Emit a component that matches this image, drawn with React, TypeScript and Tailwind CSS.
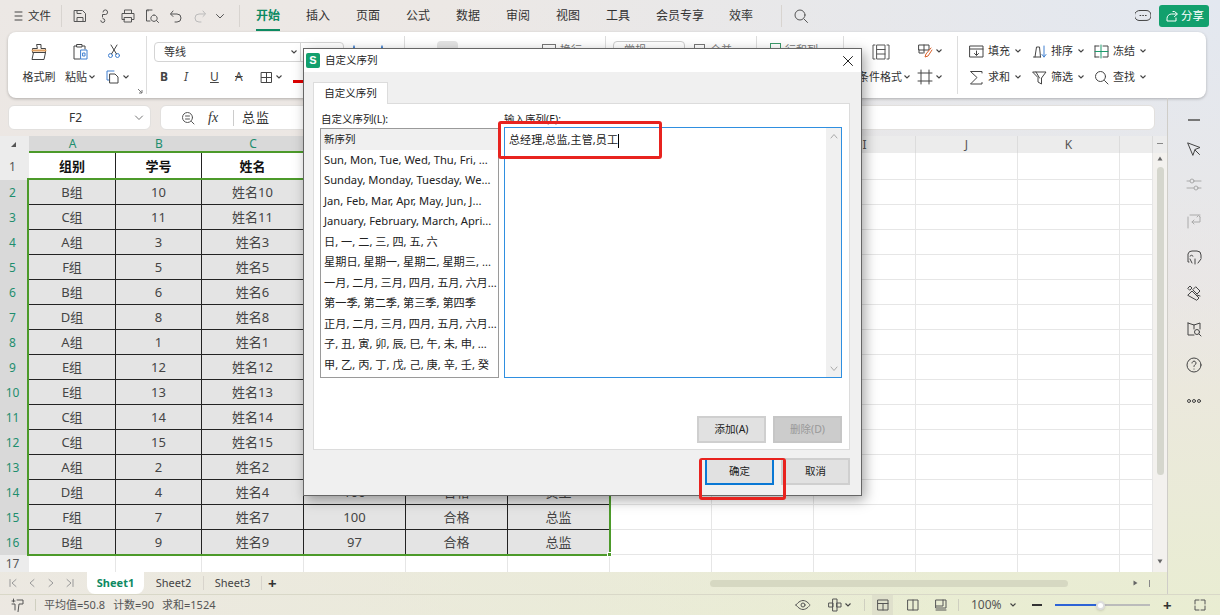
import React from "react";

type IP = { w?: number; h?: number; className?: string; children: React.ReactNode; sw?: number };
const I = ({ w = 16, h = 16, className = "", children, sw = 1 }: IP) => (
  <svg viewBox={`0 0 ${w} ${h}`} width={w} height={h} fill="none" stroke="currentColor" strokeWidth={sw} strokeLinecap="round" strokeLinejoin="round" className={"shrink-0 " + className}>
    {children}
  </svg>
);
const Caret = ({ className = "" }: { className?: string }) => (
  <svg viewBox="0 0 6 4" width={6} height={4} className={"shrink-0 " + className}><path d="M0.5 0.5 L3 3 L5.5 0.5" fill="none" stroke="#444" strokeWidth="1.1" /></svg>
);
const Div = () => <div className="w-px h-[22px] bg-[#d8d4d0] shrink-0" />;

const tabs = [
  ["开始", 24], ["插入", 24], ["页面", 24], ["公式", 24], ["数据", 24], ["审阅", 24], ["视图", 24], ["工具", 24], ["会员专享", 47], ["效率", 24],
] as [string, number][];

function TopBar() {
  return (
    <div className="h-8 flex items-center text-[#333] shrink-0">
      <I w={10} h={12} className="ml-[14px] text-[#444]"><path d="M1 2h7M1 6h7M1 10h7" /></I>
      <span className="text-[11.5px] ml-[4px] w-[24px]">文件</span>
      <div className="ml-[9px]"><Div /></div>
      <div className="flex items-center ml-[10px] gap-[8px] text-[#555]">
        <I><path d="M2.5 2.5h8l3 3v8h-11zM5 13.5v-4h6v4M5 2.5v3h4" /></I>
        <I><path d="M7 10.5a2 2 0 1 1-2.2 2.2M6.5 9V6.5h3a2.3 2.3 0 1 0-2.5-2.5" /></I>
        <I><path d="M4.5 5V2h7v3M4.5 11.5H2V5.5h12v6h-2.500M4.500 9.500h7v4.500h-7z" /></I>
        <I><path d="M8 2H2.500v11H6M4 2v1M10 7a3.200 3.200 0 1 0 .01 0M12.500 12.500l2 2" /></I>
        <I><path d="M5 3L2.500 6 5 8.500M3 6h6a3.500 3.500 0 0 1 0 8H7" /></I>
        <I className="text-[#bbb]"><path d="M11 3l2.500 3L11 8.500M13 6H7a3.500 3.500 0 0 0 0 8h2" /></I>
        <I className="-ml-[2px]" w={12}><path d="M2.500 6.500L6 10l3.500-3.500" /></I>
      </div>
      <div className="ml-[13px]"><Div /></div>
      <div className="flex items-center gap-[26px] ml-[16px] text-[12px]">
        {tabs.map(([t, w], i) => (
          <div key={t} style={{ width: w }} className={i === 0 ? "relative text-[#0d8a62] font-bold whitespace-nowrap" : "whitespace-nowrap"}>
            {t}
            {i === 0 && <div className="absolute left-0 right-0 -bottom-[6px] h-[2px] bg-[#0d8a62]" />}
          </div>
        ))}
      </div>
      <div className="ml-[28px]"><Div /></div>
      <I className="ml-[11px] text-[#555]"><circle cx="7" cy="7" r="5" /><path d="M11 11l3.500 3.500" /></I>
      <div className="flex-1" />
      <I className="text-[#444] mr-[8px]"><path d="M5 2.500h6a5 5 0 0 1 1 9.900l-8 .1a5 5 0 0 1 1-10z" /><path d="M5 7.500h.8M7.700 7.500h.8M10.400 7.500h.8" /></I>
      <div className="w-[50px] h-[22px] mr-[11px] rounded-[3px] bg-[#12a06d] text-white text-[11.5px] flex items-center pl-[6px] gap-[2px]">
        <I w={14} h={14}><path d="M8 2.500h1.500L12.500 5l-3 2.500M11.500 5H6.500A4.500 4.500 0 0 0 2 9.500V12h9V9" /></I>
        <span className="whitespace-nowrap">分享</span>
      </div>
    </div>
  );
}

const Lbl = ({ t }: { t: string }) => <span className="block leading-[14px] text-[11px] whitespace-nowrap text-[#333]">{t}</span>;

function Ribbon() {
  return (
    <div className="h-[66px] mx-2 w-[1198px] rounded-lg bg-white shadow-[0_1px_3px_rgba(0,0,0,0.25)] flex shrink-0 text-[#333]">
      {/* clipboard */}
      <div className="relative w-[139px] shrink-0 border-r border-[#ddd] my-[4px] flex pl-[15px]">
        <div className="w-[32px] flex flex-col items-center pt-[6px]">
          <I w={20} h={20} className="text-[#444]"><path d="M8 2.500h4v4h4.500v4h-13v-4H8zM4.500 10.500L3 17.500h12l1.500-7" /><path d="M3.500 8.500h13" stroke="#e0a060" strokeWidth="2" /></I>
          <div className="mt-[8px]"><Lbl t="格式刷" /></div>
        </div>
        <div className="w-[32px] ml-[10px] flex flex-col items-center pt-[6px]">
          <I w={20} h={20} className="text-[#444]"><path d="M5.500 4H3v13h6M14 7V4h-2.500M6 2.500h5V5H6z" /><path d="M10 8h6v9h-6z" stroke="#3f7fd0" /><path d="M12 11h2v3h-2z" stroke="#3f7fd0" /></I>
          <div className="mt-[8px] flex items-center gap-[2px] -ml-[2px]"><Lbl t="粘贴" /><Caret /></div>
        </div>
        <div className="ml-[8px] flex flex-col items-start pt-[7px]">
          <I w={16} h={16} className="text-[#3f7fd0] ml-[1px]"><circle cx="4.500" cy="12.500" r="2" /><circle cx="11.500" cy="12.500" r="2" /><path d="M5.500 11L11 2M10.500 11L5 2" stroke="#444" /></I>
          <div className="mt-[10px] flex items-center gap-[2px]">
            <I w={16} h={16} className="text-[#3f7fd0]"><path d="M9 2H2v9h2" /><path d="M5 5h5l3 3v6H5z" stroke="#444" /></I>
            <Caret />
          </div>
        </div>
        <svg viewBox="0 0 6 6" width={6} height={6} className="absolute right-[3px] bottom-0"><path d="M1 1l4 4M5 2v3H2" fill="none" stroke="#777" /></svg>
      </div>
      {/* font */}
      <div className="w-[258px] shrink-0 border-r border-[#ddd] my-[4px] pl-[7px] pt-[6px] flex flex-col">
        <div className="flex items-center h-[20px]">
          <div className="w-[190px] h-[20px] rounded border border-[#d4d4d4] flex items-center">
            <span className="text-[11px] pl-[9px] w-[136px]">等线</span>
            <Caret />
            <div className="w-px h-full bg-[#d4d4d4] ml-[3px]" />
          </div>
          <I className="ml-[5px] text-[#3f7fd0]"><path d="M5 2l3 10M5 2L2 12" /></I>
          <I className="ml-[12px] text-[#3f7fd0]"><path d="M5 2l3 10M5 2L2 12" /></I>
        </div>
        <div className="flex items-center mt-[6px] text-[#444] text-[12px] pl-[6px] gap-[14px]">
          <b className="w-[11px]">B</b>
          <i className="w-[11px] -ml-[1px] mr-[1px]">I</i>
          <span className="w-[11px] underline">U</span>
          <span className="w-[11px] line-through">A</span>
          <div className="flex items-center gap-[3px]">
            <I w={13} h={13}><path d="M1.500 1.500h10v10h-10zM6.500 1.500v10M1.500 6.500h10" /></I>
            <Caret />
          </div>
          <div className="w-[11px] h-[11px] border-b-[3px] border-[#d00] -ml-[3px]" />
        </div>
      </div>
      {/* alignment - mostly behind the dialog */}
      <div className="w-[201px] shrink-0 border-r border-[#ddd] my-[4px] flex items-start pt-[5px] pl-[12px] text-[#777]">
        <div className="w-[11px] h-[2px] bg-[#777] mt-[7px]" />
        <div className="ml-[9px] w-[21px] h-[20px] rounded bg-[#e4e4e4]" />
        <div className="ml-[34px] w-[11px] h-[2px] bg-[#999] mt-[7px]" />
        <div className="ml-[14px] w-[11px] h-[2px] bg-[#999] mt-[7px]" />
        <div className="ml-[14px] w-[14px] h-[12px] border border-[#777] mt-[3px]" />
        <span className="ml-[4px] mt-[1px] text-[11px]">换行</span>
      </div>
      <div className="w-[151px] shrink-0 border-r border-[#ddd] my-[4px] flex items-start pt-[5px] pl-[7px] text-[#777]">
        <div className="w-[72px] h-[20px] rounded border border-[#ccc] text-[11px] pl-[10px]">常规</div>
        <div className="ml-[9px] w-[11px] h-[10px] border border-[#777] mt-[3px]" />
        <span className="ml-[5px] mt-[1px] text-[11px]">合并</span>
      </div>
      <div className="w-[87px] shrink-0 border-r border-[#ddd] my-[4px] flex items-start pt-[5px] pl-[13px] text-[#777]">
        <div className="w-[11px] h-[12px] border border-[#3c9a6a] mt-[2px]" />
        <span className="ml-[4px] mt-[1px] text-[11px] whitespace-nowrap">行和列</span>
      </div>
      {/* cond format */}
      <div className="w-[114px] shrink-0 border-r border-[#ddd] my-[4px] flex pl-[14px]">
        <div className="w-[48px] flex flex-col items-start pt-[7px]">
          <I w={20} h={18} className="text-[#555] ml-[13px]"><path d="M4 2H2v14h2M16 2h2v14h-2M6 2h8v14H6zM6 6.500h8M6 11h8" /></I>
          <div className="mt-[9px] flex items-center gap-[2px] whitespace-nowrap"><Lbl t="条件格式" /><Caret /></div>
        </div>
        <div className="ml-[11px] flex flex-col pt-[7px]">
          <div className="flex items-center gap-[3px] h-[16px]">
            <I w={16} h={16} className="text-[#444]"><path d="M2 2h10v5H2zM7 2v8M2 7v3h4" /><path d="M14 5L9 11l-1 3 3-1 4-6" stroke="#d9602a" /></I>
            <Caret />
          </div>
          <div className="flex items-center gap-[3px] h-[16px] mt-[10px]">
            <I w={16} h={16} className="text-[#444]"><path d="M1 4h14M1 12h14M4 1v14M12 1v14" /></I>
            <Caret />
          </div>
        </div>
      </div>
      {/* edit */}
      <div className="flex pt-[11px] pl-[11px] text-[#444]">
        <div className="w-[63px] flex flex-col gap-[10px]">
          <div className="flex items-center h-[16px]"><I w={15} h={15}><path d="M1 2h13v11H1zM1 5h13M7.500 7v4M5.500 9.500l2 2 2-2" /></I><span className="ml-[4px]"><Lbl t="填充" /></span><Caret className="ml-[5px]" /></div>
          <div className="flex items-center h-[16px]"><I w={15} h={15}><path d="M13 3V1.500H1.500L8 7.500l-6.500 6.500H13V12.500" /></I><span className="ml-[4px]"><Lbl t="求和" /></span><Caret className="ml-[5px]" /></div>
        </div>
        <div className="w-[62px] flex flex-col gap-[10px]">
          <div className="flex items-center h-[16px]"><I w={15} h={15}><path d="M1.500 13h7M3 13l1.500-10h3l1 10" /><path d="M12 2v11M10 10.500l2 2.500 2-2.500" stroke="#3f7fd0" /></I><span className="ml-[4px]"><Lbl t="排序" /></span><Caret className="ml-[5px]" /></div>
          <div className="flex items-center h-[16px]"><I w={15} h={15}><path d="M1 2h13L9.500 8v6L6 12V8zM4 2l3.500 6" /></I><span className="ml-[4px]"><Lbl t="筛选" /></span><Caret className="ml-[5px]" /></div>
        </div>
        <div className="w-[62px] flex flex-col gap-[10px]">
          <div className="flex items-center h-[16px]"><I w={15} h={15}><path d="M1 2h4M1 2v11M1 13h4M9 2h5v11H9" /><path d="M1 7.500h13M7 1v13" stroke="#1d9a6c" /></I><span className="ml-[4px]"><Lbl t="冻结" /></span><Caret className="ml-[5px]" /></div>
          <div className="flex items-center h-[16px]"><I w={15} h={15}><circle cx="6.500" cy="6.500" r="5" /><path d="M10.500 10.500l3.500 3.500" /></I><span className="ml-[4px]"><Lbl t="查找" /></span><Caret className="ml-[5px]" /></div>
        </div>
      </div>
    </div>
  );
}

function FormulaBar() {
  return (
    <div className="flex mt-[7px] ml-2 h-[25px] shrink-0 gap-[9px] text-[#333]">
      <div className="w-[143px] bg-white rounded-md border border-[#e2e0de] flex items-center">
        <span className="text-[12px] w-[125px] text-center pl-[8px]">F2</span>
        <I w={10} h={8} className="text-[#777]"><path d="M1.500 2L5 5.500 8.500 2" /></I>
      </div>
      <div className="w-[995px] bg-white rounded-md border border-[#e2e0de] flex items-center">
        <I w={14} h={14} className="ml-[20px] text-[#555]"><circle cx="6.500" cy="6.500" r="5" /><path d="M4.500 5h4M4.500 8h4M10.500 10.500l2.500 2.500" /></I>
        <span className="ml-[13px] w-[16px] text-[#333] text-[14px] italic font-['Liberation_Serif',serif]">fx</span>
        <div className="w-px h-[16px] bg-[#ccc] ml-[9px]" />
        <span className="ml-[8px] text-[13px] tracking-[1px]">总监</span>
      </div>
    </div>
  );
}

const rows: string[][] = [
  ["B组", "10", "姓名10"], ["C组", "11", "姓名11"], ["A组", "3", "姓名3"], ["F组", "5", "姓名5"], ["B组", "6", "姓名6"],
  ["D组", "8", "姓名8"], ["A组", "1", "姓名1"], ["E组", "12", "姓名12"], ["E组", "13", "姓名13"], ["C组", "14", "姓名14"],
  ["C组", "15", "姓名15"], ["A组", "2", "姓名2"], ["D组", "4", "姓名4", "100", "合格", "员工"], ["F组", "7", "姓名7", "100", "合格", "总监"], ["B组", "9", "姓名9", "97", "合格", "总监"],
];
const letters = ["A", "B", "C", "", "", "", "", "", "I", "J", "K", ""];
const emptyCell = "bg-white border-r border-b border-[#e6e6e6]";

function Sheet() {
  return (
    <div className="relative flex mt-[6px] h-[436px] shrink-0">
      <div className="grid grid-cols-[29px_87px_86px_102px_102px_102px_102px_102px_102px_102px_102px_102px_33px] grid-rows-[17px_27px_repeat(15,25px)_17px] w-[1153px] text-[13px] text-[#444]">
        <div className="bg-[#ececec] flex items-center justify-center pr-[3px]">
          <svg viewBox="0 0 7 7" width={7} height={7}><path d="M6 1v5H1z" fill="#555" /></svg>
        </div>
        {letters.map((l, i) => (
          <div key={i} className={i < 6 ? "bg-[#d9d9d9] text-[#1e8e6e] text-[12px] flex items-center justify-center border-b-2 border-[#4c9a2a]" : "bg-[#ececec] text-[#555] text-[12px] flex items-center justify-center border-r border-[#dcdcdc]"}>{l}</div>
        ))}
        <div className="bg-[#ececec] text-[#555] text-[12px] flex items-center justify-center pr-[4px]">1</div>
        {["组别", "学号", "姓名", "", "", ""].map((t, i) => (
          <div key={i} className="bg-white border-r border-b border-[#222] font-bold text-[#111] flex items-center justify-center pt-px">{t}</div>
        ))}
        {Array.from({ length: 6 }).map((_, i) => <div key={i} className={emptyCell} />)}
        {rows.map((r, ri) => (
          <React.Fragment key={ri}>
            <div className="bg-[#d9d9d9] text-[#1e8e6e] text-[12px] flex items-center justify-center pr-[4px]">{ri + 2}</div>
            {[0, 1, 2, 3, 4, 5].map((c) => (
              <div key={c} className="bg-[#e4e4e4] border-r border-b border-[#222] flex items-center justify-center pt-px">{r[c] ?? ""}</div>
            ))}
            {Array.from({ length: 6 }).map((_, i) => <div key={i} className={emptyCell} />)}
          </React.Fragment>
        ))}
        <div className="bg-[#ececec] text-[#555] text-[12px] flex items-center justify-center pr-[4px]">17</div>
        {Array.from({ length: 12 }).map((_, i) => <div key={i} className="bg-white border-r border-[#e6e6e6]" />)}
      </div>
      {/* selection */}
      <div className="absolute left-[27px] top-[42px] w-[584px] h-[378px] border-2 border-[#4c9a2a] pointer-events-none">
        <div className="absolute -right-[3px] -bottom-[3px] w-[5px] h-[5px] bg-[#4c9a2a] border border-white" />
      </div>
      {/* vertical scrollbar */}
      <div className="w-[14px] flex flex-col items-center bg-[#f3f1ee]">
        <div className="h-[17px] w-full bg-[#ececec] flex items-end justify-center"><div className="w-[6px] h-px bg-[#888] mb-[9px]" /></div>
        <svg viewBox="0 0 6 5" width={6} height={5} className="mt-[3px]"><path d="M3 0.500L5.500 4.500H0.500z" fill="#666" /></svg>
        <div className="w-[7px] h-[308px] rounded bg-[#d5d6cd] mt-[6px]" />
        <div className="flex-1" />
        <svg viewBox="0 0 6 5" width={6} height={5} className="mb-[8px]"><path d="M3 4.500L5.500 0.500H0.500z" fill="#666" /></svg>
      </div>
    </div>
  );
}

function SheetTabs() {
  return (
    <div className="h-[22px] flex items-center text-[#444] text-[11px] shrink-0 relative">
      <div className="flex items-center ml-[8px] gap-[9px] text-[#999]">
        <I w={10} h={10}><path d="M2 1.500v7M8 1.500L4 5l4 3.500" /></I>
        <I w={10} h={10}><path d="M7 1.500L3 5l4 3.500" /></I>
        <I w={10} h={10}><path d="M3 1.500L7 5 3 8.500" /></I>
        <I w={10} h={10}><path d="M8 1.500v7M2 1.500L6 5 2 8.500" /></I>
      </div>
      <div className="w-[57px] h-[22px] ml-[12px] rounded-b-lg bg-white text-[#0d8a62] font-bold flex items-center justify-center">Sheet1</div>
      <div className="w-[59px] text-center">Sheet2</div>
      <div className="w-px h-[14px] bg-[#d8d4cc]" />
      <div className="w-[57px] text-center">Sheet3</div>
      <div className="w-px h-[14px] bg-[#d8d4cc]" />
      <span className="ml-[6px] text-[15px] font-bold text-[#333]">+</span>
      <div className="absolute left-[710px] w-[358px] h-[7px] rounded bg-[#d6d8c2]" />
      <svg viewBox="0 0 5 6" width={5} height={6} className="absolute left-[1133px]"><path d="M0.500 0.500L4.500 3 0.500 5.500z" fill="#666" /></svg>
      <div className="absolute left-[1149px] w-px h-[7px] bg-[#888]" />
    </div>
  );
}

function Sidebar() {
  const Cell = ({ c, k = "" }: { c: React.ReactNode; k?: string }) => <div className={"h-[36px] flex items-center justify-center " + k}>{c}</div>;
  return (
    <div className="w-[53px] border-l border-[#cfcdc8] pt-[11px] text-[#444] shrink-0">
      <div className="h-[22px] flex items-center justify-center"><div className="w-[12px] h-[1.5px] bg-[#777]" /></div>
      <Cell c={<I w={18} h={18}><path d="M3 3l12 4.500-5 2-2 5.500z" /><path d="M10 10l4.500 4.500" /></I>} />
      <Cell k="text-[#aaa]" c={<I w={18} h={18}><path d="M2 5h3M9 5h7M2 12h7M13 12h3" /><circle cx="7" cy="5" r="2" /><circle cx="11" cy="12" r="2" /></I>} />
      <Cell k="text-[#aaa]" c={<I w={18} h={18}><path d="M3 5v11M5 3h10M15 5v5H7M9 8l-2 2 2 2M12 5l1.500-1.500L15 5" /></I>} />
      <Cell c={<I w={18} h={18}><path d="M4 14H3V6a4 4 0 0 1 4-3h5a4 4 0 0 1 4 4v3" /><path d="M7 15l-2-4M10 16v-5M13 15l3-4M5 8a2 2 0 0 1 3 0" /></I>} />
      <Cell c={<I w={18} h={18}><path d="M3 11l4-4 7 7-2 2zM11 3l4 4-3 3-4-4zM3 4l2-2 2 2-2 2zM12 11l3 1" /></I>} />
      <Cell c={<I w={18} h={18}><path d="M3 3l6 2 6-2v6M3 3v12h6M9 5v4" /><circle cx="12" cy="12" r="2.500" /><path d="M14 14l2 2" /></I>} />
      <Cell c={<I w={18} h={18}><circle cx="9" cy="9" r="7" /><path d="M7 7a2 2 0 1 1 3 1.800c-.7.400-1 .800-1 1.700M9 13v.1" /></I>} />
      <Cell c={<I w={18} h={8}><circle cx="4" cy="4" r="1.500" /><circle cx="9" cy="4" r="1.500" /><circle cx="14" cy="4" r="1.500" /></I>} />
    </div>
  );
}

function StatusBar() {
  return (
    <div className="h-[21px] border-t border-[#d9d8c8] flex items-center text-[#555] text-[11px] shrink-0">
      <I w={14} h={14} className="ml-[10px] text-[#555]"><path d="M2 3h3M3.500 1v3M2 6h3v6M7 2h6v4H9l-1 8" /></I>
      <div className="w-px h-[12px] bg-[#cfcfc0] ml-[11px]" />
      <span className="ml-[8px] whitespace-nowrap">平均值=50.8</span>
      <span className="ml-[8px] whitespace-nowrap">计数=90</span>
      <span className="ml-[8px] whitespace-nowrap">求和=1524</span>
      <div className="flex-1" />
      <I w={16} h={12} className="text-[#555]"><path d="M1 6s3-4.500 7-4.500S15 6 15 6s-3 4.500-7 4.500S1 6 1 6z" /><circle cx="8" cy="6" r="2" /></I>
      <I w={14} h={14} className="ml-[17px] text-[#555]"><path d="M5 1h4v12H5zM1 5h4v4H1zM9 5h4v4H9z" /></I>
      <Caret className="ml-[3px]" />
      <div className="w-px h-[12px] bg-[#cfcfc0] ml-[13px]" />
      <div className="ml-[7px] w-[21px] h-[20px] bg-[#dfe0cc] flex items-center justify-center"><I w={12} h={12}><path d="M1 1h10v10H1zM1 4.500h10M6 4.500V11" /></I></div>
      <I w={12} h={12} className="ml-[14px]"><path d="M1 1h10v10H1zM6 1v10" /></I>
      <I w={12} h={12} className="ml-[16px]"><path d="M1 1h10v8H1zM1 11h10M8 1v6H1" /></I>
      <div className="w-px h-[12px] bg-[#cfcfc0] ml-[11px]" />
      <span className="ml-[12px] w-[32px] text-[12px]">100%</span>
      <Caret className="ml-[7px]" />
      <div className="w-[10px] h-[1.5px] bg-[#333] ml-[16px]" />
      <div className="ml-[13px] w-[95px] h-[2px] flex items-center relative bg-[#bbb]">
        <div className="w-[44px] h-[2px] bg-[#2d63d6]" />
        <div className="absolute left-[41px] w-[9px] h-[9px] rounded-full bg-white shadow border-[2px] border-[#ddd]" />
      </div>
      <span className="ml-[13px] text-[15px] font-bold text-[#333] w-[10px] leading-none">+</span>
      <I w={12} h={12} className="ml-[21px] mr-[14px]"><path d="M7 1h4v4M1 7v4h4M5 1H1v4M7 11h4V7" /></I>
    </div>
  );
}

const seqItems = [
  "新序列", "Sun, Mon, Tue, Wed, Thu, Fri, ...", "Sunday, Monday, Tuesday, We...", "Jan, Feb, Mar, Apr, May, Jun, J...", "January, February, March, Apri...",
  "日, 一, 二, 三, 四, 五, 六", "星期日, 星期一, 星期二, 星期三, ...", "一月, 二月, 三月, 四月, 五月, 六月...", "第一季, 第二季, 第三季, 第四季", "正月, 二月, 三月, 四月, 五月, 六月...",
  "子, 丑, 寅, 卯, 辰, 巳, 午, 未, 申, ...", "甲, 乙, 丙, 丁, 戊, 己, 庚, 辛, 壬, 癸",
];

function Dialog() {
  const btn = "w-[69px] h-[27px] border-2 border-[#cfcfcf] bg-[#e1e1e1] flex items-center justify-center text-[10.5px]";
  return (
    <div className="absolute left-[303px] top-[48px] w-[559px] h-[448px] bg-[#f0f0f0] border border-[#666] shadow-[3px_4px_12px_rgba(0,0,0,0.35)] text-[10.5px] text-[#222] flex flex-col">
      <div className="h-[23px] bg-white flex items-center shrink-0">
        <div className="ml-[2px] w-[14px] h-[15px] rounded-[2px] bg-[#12a06d] text-white text-[11px] font-bold flex items-center justify-center font-['Liberation_Sans',sans-serif]">S</div>
        <span className="ml-[5px]">自定义序列</span>
        <div className="flex-1" />
        <I w={12} h={12} className="mr-[7px] text-[#222]"><path d="M1.500 1.500l9 9M10.500 1.500l-9 9" /></I>
      </div>
      <div className="flex-1 pl-[9px] pr-[11px] pt-[10px] flex flex-col">
        <div className="w-[75px] h-[22px] bg-white border border-[#dcdcdc] border-b-0 flex items-center justify-center shrink-0 relative z-10 -mb-px">自定义序列</div>
        <div className="w-[537px] h-[347px] bg-white border border-[#dcdcdc] flex flex-col shrink-0 pl-[6px] pt-[8px]">
          <div className="flex">
            <div className="w-[184px]">
              <div className="h-[16px] leading-[14px] pl-px">自定义序列(L):</div>
              <div className="w-[179px] h-[250px] border border-[#9a9a9a] text-[11.2px] overflow-hidden">
                {seqItems.map((s, i) => (
                  <div key={s} className={"h-[20.500px] leading-[20px] pl-[3px] whitespace-nowrap " + (i === 0 ? "bg-[#f0f0f0] text-[10.5px]" : "")}>{s}</div>
                ))}
              </div>
            </div>
            <div className="flex flex-col">
              <div className="h-[15px] leading-[14px]">输入序列(E):</div>
              <div className="relative w-[338px] h-[251px] border border-[#2f8fe0] pl-[4px] pt-[5px] text-[11px]">
                <div className="flex items-center h-[15px] tracking-[0.1px]">总经理,总监,主管,员工<div className="w-px h-[14px] bg-black" /></div>
                <div className="absolute right-0 top-0 bottom-0 w-[15px] bg-[#f0f0f0] flex flex-col items-center justify-between py-[5px] text-[#aaa]">
                  <I w={8} h={6}><path d="M1 5l3-3.500L7 5" /></I>
                  <I w={8} h={6}><path d="M1 1l3 3.500L7 1" /></I>
                </div>
              </div>
            </div>
          </div>
          <div className="flex justify-end gap-[7px] mt-[38px] pr-[7px]">
            <div className={btn}>添加(A)</div>
            <div className="w-[69px] h-[27px] border-2 border-[#c6c6c6] bg-[#cccccc] flex items-center justify-center text-[#999]">删除(D)</div>
          </div>
        </div>
        <div className="flex justify-end gap-[7px] mt-[8px]">
          <div className="w-[69px] h-[27px] border-2 border-[#0a78d4] bg-[#e1e1e1] flex items-center justify-center">确定</div>
          <div className={btn}>取消</div>
        </div>
      </div>
      {/* red annotation boxes */}
      <div className="absolute left-[194px] top-[72px] w-[164px] h-[38px] border-[3px] border-[#e8231f] rounded-[3px]" />
      <div className="absolute left-[395px] top-[409px] w-[87px] h-[42px] border-[3px] border-[#e8231f] rounded-[3px] border-t-[2px]" />
    </div>
  );
}

export default function App() {
  return (
    <div className="relative w-[1220px] h-[615px] overflow-hidden flex flex-col font-['Noto_Sans','Noto_Sans_CJK_SC',sans-serif] bg-[radial-gradient(ellipse_at_top_right,#e3e8f0_0%,transparent_45%),radial-gradient(ellipse_at_bottom_left,#ece8e2_0%,transparent_55%),linear-gradient(180deg,#ece8e5_0%,#ece6e2_45%,#e9edd2_100%)]">
      <TopBar />
      <Ribbon />
      <div className="flex flex-1 min-h-0">
        <div className="w-[1167px] shrink-0 flex flex-col">
          <FormulaBar />
          <Sheet />
          <SheetTabs />
        </div>
        <Sidebar />
      </div>
      <StatusBar />
      <Dialog />
    </div>
  );
}
